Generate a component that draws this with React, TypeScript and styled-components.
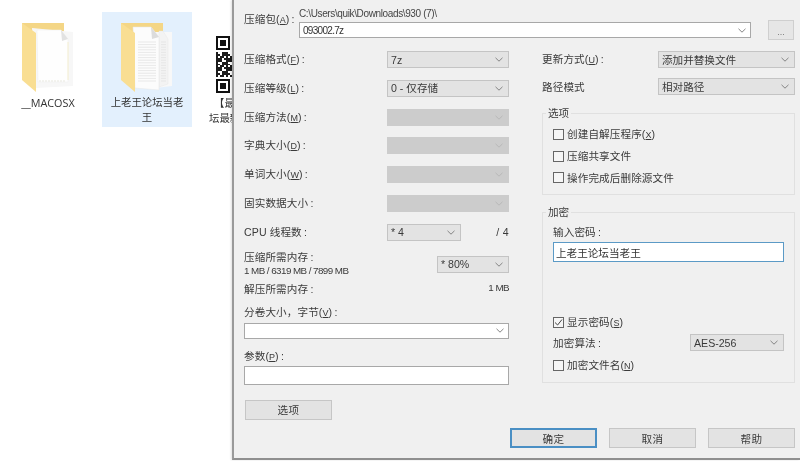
import React from 'react';
import styled, { createGlobalStyle } from 'styled-components';

const GlobalStyle = createGlobalStyle`
  html, body {
    margin: 0;
    padding: 0;
    width: 800px;
    height: 461px;
    overflow: hidden;
    background: #fff;
  }
  * {
    box-sizing: border-box;
  }
`;

const Screen = styled.div`
  position: relative;
  width: 800px;
  height: 461px;
  overflow: hidden;
  background: #fff;
  color: #3a3a3a;
  font-family: 'Liberation Sans', 'Noto Sans CJK SC', sans-serif;
  font-size: 10.6px;
  filter: blur(0.3px);
`;

/* desktop */
const Desktop = styled.div`
  display: flex;
  gap: 9px;
  padding: 12px 0 0 3px;
`;

const DesktopItem = styled.div<{ $selected?: boolean }>`
  flex: none;
  display: flex;
  flex-direction: column;
  align-items: center;
  width: 90px;
  height: 115px;
  padding: 10px 4px 0;
  background: ${(props) => (props.$selected ? '#e3f0fd' : 'transparent')};
`;

const ItemIcon = styled.svg`
  display: block;
  flex: none;
  width: 52px;
  height: 71px;
`;

const QrIcon = styled.svg`
  display: block;
  flex: none;
  width: 57px;
  height: 57px;
  margin: 14px 4px 0 0;
`;

const ItemLabel = styled.div`
  margin-top: 2px;
  width: 100%;
  text-align: center;
  font-size: 10.4px;
  line-height: 15px;
  color: #333;
`;

const QrLabel = styled(ItemLabel)`
  margin-top: 3px;
  padding-left: 4px;
  text-align: left;
  text-indent: 5px;
`;

const LatinLabel = styled(ItemLabel)`
  font-family: 'Open Sans', sans-serif;
  font-size: 10.8px;
`;

/* dialog */
const Dialog = styled.div`
  position: absolute;
  left: 232px;
  top: 0;
  width: 568px;
  height: 460px;
  padding: 0 5px 0 10px;
  background: #f0f0f0;
  border-left: 2px solid #9a9a9a;
  border-bottom: 2px solid #8f8f8f;
  box-shadow: -1px 0 2px rgba(0, 0, 0, 0.12);
`;

const ArchiveRow = styled.div`
  display: flex;
  height: 51px;
`;

const ArchiveLabel = styled.div`
  width: 55px;
  flex: none;
  padding-top: 12px;
  line-height: 14px;
`;

const ArchivePath = styled.div`
  width: 452px;
  flex: none;
`;

const PathText = styled.div`
  height: 22px;
  padding-top: 8px;
  font-size: 10px;
  letter-spacing: -0.37px;
  line-height: 12px;
  color: #444;
`;

const BrowseButton = styled.div`
  flex: none;
  width: 26px;
  height: 20px;
  margin: 20px 0 0 17px;
  padding-top: 5px;
  background: #e6e6e6;
  border: 1px solid #cfcfcf;
  text-align: center;
  font-size: 9px;
  line-height: 12px;
  color: #777;
`;

const Columns = styled.div`
  display: flex;
  gap: 33px;
  height: 369px;
`;

const LeftColumn = styled.div`
  width: 265px;
  flex: none;
  display: flex;
  flex-direction: column;
`;

const RightColumn = styled.div`
  width: 253px;
  flex: none;
  display: flex;
  flex-direction: column;
`;

const FieldRow = styled.div<{ $pitch?: number }>`
  flex: none;
  display: flex;
  align-items: center;
  justify-content: space-between;
  height: 17px;
  margin-bottom: ${(props) => (props.$pitch ?? 28.8) - 17}px;
`;

const Label = styled.span`
  line-height: 14px;
  white-space: nowrap;
  letter-spacing: 0.1px;
`;

const Mnemonic = styled.span`
  font-size: 9px;
  text-decoration: underline;
  letter-spacing: 0;
`;

const SelectBox = styled.div<{ $width: number; $disabled?: boolean }>`
  flex: none;
  display: flex;
  align-items: center;
  justify-content: space-between;
  width: ${(props) => props.$width}px;
  height: 17px;
  padding: 0 5px 0 3px;
  background: ${(props) => (props.$disabled ? '#cccccc' : '#e3e3e3')};
  border: 1px solid ${(props) => (props.$disabled ? '#cccccc' : '#c4c4c4')};
  line-height: 14px;
  white-space: nowrap;
  color: #3a3a3a;
`;

const Chevron = styled.svg<{ $disabled?: boolean }>`
  flex: none;
  width: 8px;
  height: 5px;
  fill: none;
  stroke: ${(props) => (props.$disabled ? '#b8b8b8' : '#858585')};
  stroke-width: 1;
`;

const ThreadRow = styled(FieldRow)`
  margin-bottom: 9px;
`;

const ThreadLabel = styled.div`
  flex: none;
  width: 143px;
`;

const ThreadTotal = styled.span`
  margin-left: auto;
  letter-spacing: 0.3px;
`;

const MemoryRow = styled.div`
  flex: none;
  display: flex;
  justify-content: space-between;
  height: 26px;
  margin-bottom: 6px;
`;

const MemoryText = styled.div`
  display: flex;
  flex-direction: column;
  line-height: 13px;
`;

const MemoryNumbers = styled.span`
  font-size: 9.8px;
  letter-spacing: -0.55px;
`;

const MemorySelect = styled(SelectBox)`
  margin-top: 6px;
`;

const PlainRow = styled.div`
  flex: none;
  display: flex;
  justify-content: space-between;
  height: 12px;
  margin-bottom: 11px;
  line-height: 12px;
`;

const BlockLabel = styled.div`
  flex: none;
  height: 12px;
  margin-bottom: 6px;
  line-height: 12px;
`;

const ParamLabel = styled(BlockLabel)`
  margin-bottom: 5px;
`;

const ComboBox = styled.div`
  flex: none;
  display: flex;
  align-items: center;
  justify-content: flex-end;
  height: 16px;
  margin-bottom: 10px;
  padding-right: 4px;
  background: #fff;
  border: 1px solid #a8a8a8;
`;

const ArchiveCombo = styled(ComboBox)`
  justify-content: space-between;
  margin: 0;
  padding-left: 3px;
  font-size: 10px;
  letter-spacing: -0.7px;
  color: #333;
`;

const TextField = styled.div`
  flex: none;
  height: 19px;
  background: #fff;
  border: 1px solid #a8a8a8;
`;

const PushButton = styled.div<{ $primary?: boolean }>`
  flex: none;
  display: flex;
  align-items: center;
  justify-content: center;
  width: 87px;
  height: 20px;
  background: #e3e3e3;
  border: ${(props) => (props.$primary ? '2px solid #4a8fc4' : '1px solid #c6c6c6')};
  letter-spacing: 0.3px;
`;

const OptionsButton = styled(PushButton)`
  margin: 15px 0 0 1px;
`;

const Group = styled.div<{ $height: number; $top: number }>`
  position: relative;
  flex: none;
  display: flex;
  flex-direction: column;
  height: ${(props) => props.$height}px;
  margin-top: ${(props) => props.$top}px;
  padding: 0 10px;
  border: 1px solid #e0e0e0;
`;

const GroupTitle = styled.span`
  position: absolute;
  left: 3px;
  top: -7px;
  padding: 0 2px;
  background: #f0f0f0;
  line-height: 13px;
`;

const CheckRow = styled.div<{ $top: number }>`
  flex: none;
  display: flex;
  align-items: center;
  gap: 2px;
  height: 13px;
  margin-top: ${(props) => props.$top}px;
  line-height: 13px;
`;

const CheckBox = styled.span`
  flex: none;
  display: flex;
  align-items: center;
  justify-content: center;
  width: 11px;
  height: 11px;
  margin-right: 1px;
  background: #f6f6f6;
  border: 1px solid #666;
`;

const CheckMark = styled.svg`
  width: 9px;
  height: 9px;
  fill: none;
  stroke: #444;
  stroke-width: 1;
`;

const PasswordLabel = styled.div`
  flex: none;
  height: 12px;
  margin-top: 12px;
  line-height: 12px;
`;

const PasswordField = styled.div`
  flex: none;
  display: flex;
  align-items: center;
  height: 20px;
  margin-top: 5px;
  padding-left: 2px;
  background: #fff;
  border: 1px solid #5b9ac6;
  color: #333;
`;

const AlgorithmRow = styled.div`
  flex: none;
  display: flex;
  align-items: center;
  justify-content: space-between;
  height: 17px;
  margin-top: 5px;
`;

const Footer = styled.div`
  display: flex;
  justify-content: flex-end;
  gap: 12px;
  margin-top: 8px;
`;

const ChevronIcon = ({ disabled }: { disabled?: boolean }) => (
  <Chevron $disabled={disabled} viewBox="0 0 8 5">
    <path d="M0.5 0.8 L4 4.2 L7.5 0.8" />
  </Chevron>
);

const Select = ({ width, text, disabled }: { width: number; text?: string; disabled?: boolean }) => (
  <SelectBox $width={width} $disabled={disabled}>
    <span>{text}</span>
    <ChevronIcon disabled={disabled} />
  </SelectBox>
);

const Key = ({ label, k, colon = true }: { label: string; k?: string; colon?: boolean }) => (
  <Label>
    {label}
    {k && (
      <>
        (<Mnemonic>{k}</Mnemonic>)
      </>
    )}
    {colon ? '\u2009:' : ''}
  </Label>
);

const Check = ({ top, checked, children }: { top: number; checked?: boolean; children: React.ReactNode }) => (
  <CheckRow $top={top}>
    <CheckBox>
      {checked && (
        <CheckMark viewBox="0 0 9 9">
          <path d="M1 4.5 L3.6 7 L8 1.5" />
        </CheckMark>
      )}
    </CheckBox>
    {children}
  </CheckRow>
);

const FolderBase = ({ children }: { children: React.ReactNode }) => (
  <ItemIcon viewBox="0 0 52 71">
    <path d="M0 1 H42 V12 H0 Z" fill="#f4d686" />
    {children}
    <path d="M0 1 L14 11 V70 L0 58 Z" fill="#f9de92" />
  </ItemIcon>
);

const EmptyFolder = () => (
  <FolderBase>
    <path d="M10 6 L51 10 V64 L14 66 Z" fill="#f7f7f7" />
    <path d="M15 8 H39 L46 17 V60 H16 Z" fill="#fefefe" stroke="#ececec" strokeWidth="0.5" />
    <path d="M39 8 L46 17 L40 19 Z" fill="#e2e2e2" />
    <path d="M17 59 H44" stroke="#e0e0d2" strokeWidth="0.7" strokeDasharray="2 1" />
    <path d="M46 20 V58" stroke="#f5edc6" strokeWidth="0.8" />
  </FolderBase>
);

const fullLines = Array.from({ length: 16 }, (_, i) => 20 + i * 2.6);

const DocFolder = () => (
  <FolderBase>
    <path d="M30 10 L51 10 V64 L34 66 Z" fill="#f8f8f8" />
    <path d="M38 9 H42 L47 17 V62 L38 65 Z" fill="#f3f3f3" stroke="#e6e6e6" strokeWidth="0.4" />
    <path d="M12 5 H30 L38 15 V68 L14 66 Z" fill="#fcfcfc" stroke="#e6e6e6" strokeWidth="0.5" />
    <path d="M30 5 L38 15 L31 17 Z" fill="#dcdcdc" />
    {fullLines.map((y) => (
      <path key={y} d={`M17 ${y} H35`} stroke="#dadada" strokeWidth="0.6" />
    ))}
    {fullLines.map((y) => (
      <path key={y} d={`M40 ${y} H45`} stroke="#dedede" strokeWidth="0.6" />
    ))}
  </FolderBase>
);

const QR_SIZE = 29;
const inFinder = (x: number, y: number) => x < 8 && (y < 8 || y >= QR_SIZE - 8);
const qrCells: [number, number][] = [];
for (let y = 0; y < QR_SIZE; y += 1) {
  for (let x = 0; x < QR_SIZE; x += 1) {
    if (!inFinder(x, y) && (x * x * 3 + y * y * 5 + x * y * 7) % 5 < 3) {
      qrCells.push([x, y]);
    }
  }
}

const Finder = ({ y }: { y: number }) => (
  <>
    <rect x="0.5" y={y + 0.5} width="6" height="6" fill="none" stroke="#111" />
    <rect x="2" y={y + 2} width="3" height="3" fill="#111" />
  </>
);

const QrCode = () => (
  <QrIcon viewBox="0 0 29 29" shapeRendering="crispEdges">
    <Finder y={0} />
    <Finder y={22} />
    {qrCells.map(([x, y]) => (
      <rect key={`${x}-${y}`} x={x} y={y} width="1" height="1" fill="#1c1c1c" />
    ))}
  </QrIcon>
);

const App = () => (
  <Screen>
    <GlobalStyle />
    <Desktop>
      <DesktopItem>
        <EmptyFolder />
        <LatinLabel>__MACOSX</LatinLabel>
      </DesktopItem>
      <DesktopItem $selected>
        <DocFolder />
        <ItemLabel>上老王论坛当老王</ItemLabel>
      </DesktopItem>
      <DesktopItem>
        <QrCode />
        <QrLabel>
          【最新
          <br />
          坛最新
        </QrLabel>
      </DesktopItem>
    </Desktop>

    <Dialog>
      <ArchiveRow>
        <ArchiveLabel>
          <Key label="压缩包" k="A" />
        </ArchiveLabel>
        <ArchivePath>
          <PathText>C:\Users\quik\Downloads\930 (7)\</PathText>
          <ArchiveCombo>
            <span>093002.7z</span>
            <ChevronIcon />
          </ArchiveCombo>
        </ArchivePath>
        <BrowseButton>...</BrowseButton>
      </ArchiveRow>

      <Columns>
        <LeftColumn>
          <FieldRow>
            <Key label="压缩格式" k="F" />
            <Select width={122} text="7z" />
          </FieldRow>
          <FieldRow>
            <Key label="压缩等级" k="L" />
            <Select width={122} text="0 - 仅存储" />
          </FieldRow>
          <FieldRow>
            <Key label="压缩方法" k="M" />
            <Select width={122} disabled />
          </FieldRow>
          <FieldRow>
            <Key label="字典大小" k="D" />
            <Select width={122} disabled />
          </FieldRow>
          <FieldRow>
            <Key label="单词大小" k="W" />
            <Select width={122} disabled />
          </FieldRow>
          <FieldRow>
            <Key label="固实数据大小" />
            <Select width={122} disabled />
          </FieldRow>
          <ThreadRow>
            <ThreadLabel>
              <Key label="CPU 线程数" />
            </ThreadLabel>
            <Select width={74} text="* 4" />
            <ThreadTotal>/ 4</ThreadTotal>
          </ThreadRow>
          <MemoryRow>
            <MemoryText>
              <Key label="压缩所需内存" />
              <MemoryNumbers>1 MB / 6319 MB / 7899 MB</MemoryNumbers>
            </MemoryText>
            <MemorySelect $width={72}>
              <span>* 80%</span>
              <ChevronIcon />
            </MemorySelect>
          </MemoryRow>
          <PlainRow>
            <Key label="解压所需内存" />
            <MemoryNumbers>1 MB</MemoryNumbers>
          </PlainRow>
          <BlockLabel>
            <Key label="分卷大小，字节" k="V" />
          </BlockLabel>
          <ComboBox>
            <ChevronIcon />
          </ComboBox>
          <ParamLabel>
            <Key label="参数" k="P" />
          </ParamLabel>
          <TextField />
          <OptionsButton>选项</OptionsButton>
        </LeftColumn>

        <RightColumn>
          <FieldRow $pitch={27}>
            <Key label="更新方式" k="U" />
            <Select width={137} text="添加并替换文件" />
          </FieldRow>
          <FieldRow $pitch={35}>
            <Key label="路径模式" colon={false} />
            <Select width={137} text="相对路径" />
          </FieldRow>
          <Group $height={82} $top={0}>
            <GroupTitle>选项</GroupTitle>
            <Check top={14}>
              <Label>
                创建自解压程序(<Mnemonic>X</Mnemonic>)
              </Label>
            </Check>
            <Check top={8.5}>
              <Label>压缩共享文件</Label>
            </Check>
            <Check top={8.5}>
              <Label>操作完成后删除源文件</Label>
            </Check>
          </Group>
          <Group $height={171} $top={17}>
            <GroupTitle>加密</GroupTitle>
            <PasswordLabel>
              <Key label="输入密码" />
            </PasswordLabel>
            <PasswordField>上老王论坛当老王</PasswordField>
            <Check top={54} checked>
              <Label>
                显示密码(<Mnemonic>S</Mnemonic>)
              </Label>
            </Check>
            <AlgorithmRow>
              <Key label="加密算法" />
              <Select width={94} text="AES-256" />
            </AlgorithmRow>
            <Check top={8}>
              <Label>
                加密文件名(<Mnemonic>N</Mnemonic>)
              </Label>
            </Check>
          </Group>
        </RightColumn>
      </Columns>

      <Footer>
        <PushButton $primary>确定</PushButton>
        <PushButton>取消</PushButton>
        <PushButton>帮助</PushButton>
      </Footer>
    </Dialog>
  </Screen>
);

export default App;
